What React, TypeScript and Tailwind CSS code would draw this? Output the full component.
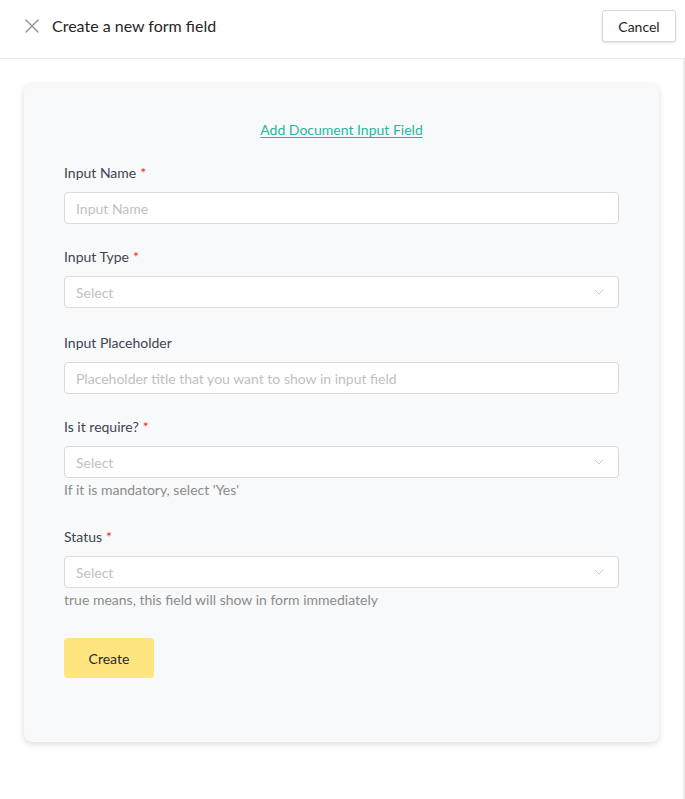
import { X, ChevronDown } from "lucide-react";

function Label({ text, required }: { text: string; required?: boolean }) {
  return (
    <label className="block text-[14px] text-[#3d4451] leading-5 mb-[9px]">
      {text}
      {required && <span className="text-[#f5222d] ml-1">*</span>}
    </label>
  );
}

function TextInput({ placeholder }: { placeholder: string }) {
  return (
    <input
      placeholder={placeholder}
      className="w-full h-8 px-[11px] bg-white border border-[#d9d9d9] rounded-[4px] text-[14px] placeholder:text-[#bfbfbf] outline-none"
    />
  );
}

function SelectBox() {
  return (
    <div className="w-full h-8 px-[11px] bg-white border border-[#d9d9d9] rounded-[4px] flex items-center justify-between">
      <span className="text-[14px] text-[#bfbfbf]">Select</span>
      <ChevronDown className="w-[16px] h-[16px] text-[#bfbfbf]" strokeWidth={1.2} />
    </div>
  );
}

export default function App() {
  return (
    <div className="w-[685px] min-h-[799px] bg-white font-['Lato',sans-serif]">
      <div className="h-[59px] border-b border-[#ececec] flex items-start justify-between pl-[20px] pr-[9px] pt-[10px]">
        <div className="flex items-center gap-[8px] h-8">
          <X className="w-[24px] h-[24px] text-[#8c8c8c]" strokeWidth={1.3} />
          <h1 className="text-[16px] text-[#262626]">Create a new form field</h1>
        </div>
        <button className="h-8 w-[74px] border border-[#d9d9d9] rounded-[3px] text-[14px] text-[#262626] bg-white shadow-sm">
          Cancel
        </button>
      </div>
      <div className="border-r-2 border-[#ececec] min-h-[740px] pt-[25px] pl-[24px] pr-[24px]">
        <div className="w-[635px] bg-[#f8f9fa] rounded-[8px] shadow-[0_2px_6px_rgba(0,0,0,0.15)] px-[40px] pt-[33px] pb-[64px]">
          <div className="text-center">
            <a className="text-[14px] text-[#1fb8a0] underline underline-offset-2">Add Document Input Field</a>
          </div>
          <div className="mt-[22px]">
            <Label text="Input Name" required />
            <TextInput placeholder="Input Name" />
          </div>
          <div className="mt-[23px]">
            <Label text="Input Type" required />
            <SelectBox />
          </div>
          <div className="mt-[25px]">
            <Label text="Input Placeholder" />
            <TextInput placeholder="Placeholder title that you want to show in input field" />
          </div>
          <div className="mt-[23px]">
            <Label text="Is it require?" required />
            <SelectBox />
            <p className="text-[14px] text-[#8c8c8c] mt-[2px] leading-5">If it is mandatory, select 'Yes'</p>
          </div>
          <div className="mt-[27px]">
            <Label text="Status" required />
            <SelectBox />
            <p className="text-[14px] text-[#8c8c8c] mt-[2px] leading-5">true means, this field will show in form immediately</p>
          </div>
          <button className="mt-[28px] w-[90px] h-10 bg-[#ffe57f] rounded-[4px] text-[14px] text-[#1f2937]">
            Create
          </button>
        </div>
      </div>
    </div>
  );
}
